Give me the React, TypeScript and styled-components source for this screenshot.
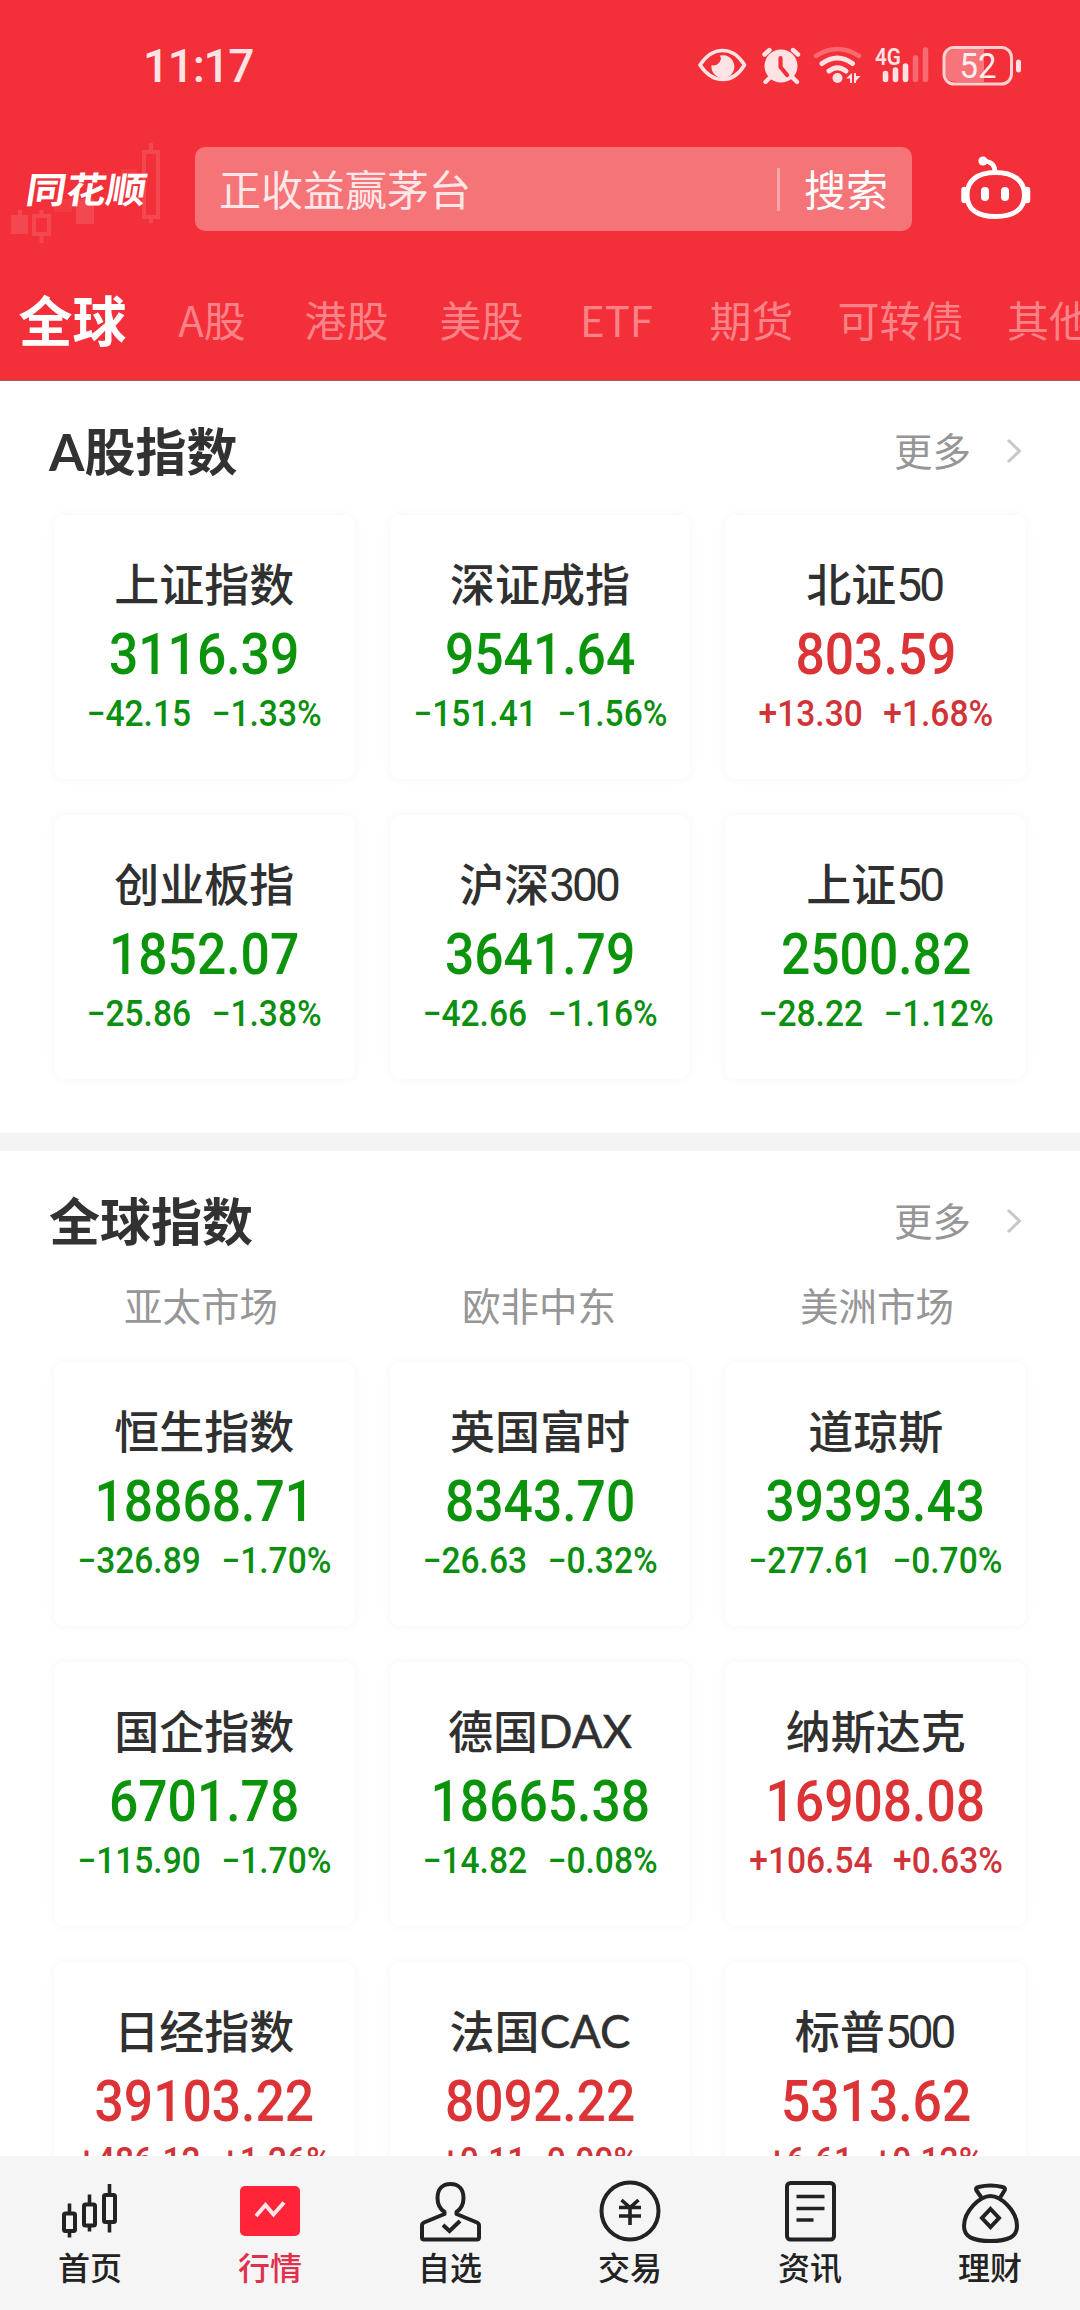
import React from "react";
import styled, { createGlobalStyle } from "styled-components";

const CJK = `"Noto Sans CJK SC", sans-serif`;
const MIX = `Lato, "Noto Sans CJK SC", sans-serif`;

const Global = createGlobalStyle`
  * { box-sizing: border-box; }
  body { margin: 0; background: #fff; font-family: ${CJK}; }
`;

const Screen = styled.div`
  width: 1080px;
  height: 2310px;
  display: flex;
  flex-direction: column;
  overflow: hidden;
  background: #fff;
`;

const Header = styled.header`
  flex: none;
  height: 381px;
  background: #f32f39;
  border-bottom: 1px solid #a8595c;
`;

const StatusBar = styled.div`
  height: 131px;
  padding: 0 59px 0 143px;
  display: flex;
  align-items: center;
  justify-content: space-between;
`;

const Clock = styled.span`
  font: 500 46px/60px Roboto, sans-serif;
  letter-spacing: -1.3px;
  color: #ffe3e4;
`;

const StatusSvg = styled.svg`
  display: block;
  width: 323px;
  height: 40px;
`;

const TopRow = styled.div`
  height: 116px;
  display: flex;
  align-items: center;
`;

const Brand = styled.div`
  position: relative;
  flex: none;
  width: 195px;
  height: 116px;
  display: flex;
  align-items: center;
  padding: 0 0 3px 27px;
`;

const BrandMark = styled.svg`
  position: absolute;
  left: 0;
  top: 0;
  width: 195px;
  height: 116px;
`;

const BrandName = styled.span`
  position: relative;
  font: 700 40px/40px ${CJK};
  color: #fff;
  transform: skewX(-9deg) scaleY(0.9);
`;

const Search = styled.div`
  flex: none;
  width: 717px;
  height: 84px;
  border-radius: 10px;
  background: #f57478;
  display: flex;
  align-items: center;
  padding-left: 24px;
`;

const Placeholder = styled.span`
  flex: 1;
  padding-bottom: 3px;
  font: 400 42px/60px ${CJK};
  color: #ffe6e7;
`;

const SearchRule = styled.i`
  width: 3px;
  height: 43px;
  background: #f9a6a8;
`;

const SearchButton = styled.span`
  width: 132px;
  padding: 0 0 3px 24px;
  font: 400 42px/60px ${CJK};
  color: #fff;
`;

const Robot = styled.svg`
  display: block;
  margin-left: 47px;
  width: 74px;
  height: 68px;
`;

const Tabs = styled.nav`
  height: 133px;
  padding-top: 10px;
  display: flex;
  align-items: center;
  overflow: hidden;
`;

const Tab = styled.span<{ $w: number; $active?: boolean }>`
  flex: none;
  width: ${(p) => p.$w}px;
  text-align: center;
  white-space: nowrap;
  font-family: ${CJK};
  font-size: ${(p) => (p.$active ? 54 : 42)}px;
  font-weight: ${(p) => (p.$active ? 700 : 400)};
  line-height: 80px;
  color: ${(p) => (p.$active ? "#fff" : "#fb8388")};
`;

const Body = styled.main`
  flex: 1;
  min-height: 0;
  overflow: hidden;
`;

const Section = styled.section<{ $last?: boolean }>`
  padding: 0 54px ${(p) => (p.$last ? 0 : 54)}px;
  border-bottom: ${(p) => (p.$last ? 0 : 18)}px solid #f4f4f4;
`;

const SectionHead = styled.div<{ $h: number }>`
  height: ${(p) => p.$h}px;
  padding-top: 32px;
  margin-left: -5px;
  display: flex;
  align-items: flex-start;
  justify-content: space-between;
`;

const Title = styled.h2`
  margin: 0;
  font: 700 51px/78px ${MIX};
  color: #323232;
`;

const More = styled.span`
  display: flex;
  align-items: center;
  gap: 35px;
  padding-right: 4px;
  font: 400 38.5px/72px ${CJK};
  color: #969696;
`;

const Chevron = styled.svg`
  display: block;
  width: 16px;
  height: 26px;
  margin-top: 3px;
`;

const Regions = styled.div`
  display: grid;
  grid-template-columns: repeat(3, 338px);
  margin: 0 -22px;
  height: 92px;
  text-align: center;
  font: 400 38.5px/68px ${CJK};
  color: #969696;
`;

const Grid = styled.div`
  display: grid;
  grid-template-columns: repeat(3, 1fr);
  grid-auto-rows: 264px;
  gap: 36px 35px;
`;

const Card = styled.article`
  display: flex;
  flex-direction: column;
  align-items: center;
  padding-top: 38px;
  border-radius: 10px;
  background: #fff;
  box-shadow: 0 0 12px rgba(0, 0, 0, 0.045);
  white-space: nowrap;
`;

const Name = styled.span`
  display: flex;
  height: 60px;
  font: 500 45px/60px ${CJK};
  color: #303030;
`;

const Latin = styled.span`
  font: 400 45.5px/62px Lato, sans-serif;
  -webkit-text-stroke: 0.5px #303030;
`;

const Digits = styled.span`
  font: 400 46px/64px Roboto, sans-serif;
  letter-spacing: -3px;
  margin-right: 3px;
`;

const Price = styled.span<{ $up?: boolean }>`
  margin-top: 9px;
  font: 500 57px/66px Roboto, sans-serif;
  color: ${(p) => (p.$up ? "#db3336" : "#0b940b")};
  transform: scaleX(0.905);
`;

const Change = styled.span<{ $up?: boolean }>`
  margin-top: 4px;
  display: flex;
  gap: 22px;
  font: 500 36px/44px Roboto, sans-serif;
  color: ${(p) => (p.$up ? "#d03439" : "#0b8f0f")};
  transform: scaleX(0.932);
`;

const BottomBar = styled.footer`
  flex: none;
  height: 154px;
  background: #f5f5f5;
  display: grid;
  grid-template-columns: repeat(6, 1fr);
`;

const NavItem = styled.div<{ $active?: boolean }>`
  display: flex;
  flex-direction: column;
  align-items: center;
  padding-top: 20px;
  font: 500 32px/40px ${CJK};
  color: ${(p) => (p.$active ? "#e0304a" : "#222")};
`;

const NavSvg = styled.svg`
  display: block;
  width: 70px;
  height: 70px;
  fill: none;
  stroke: #222;
  stroke-width: 4;
`;

type Quote = [name: string, price: string, diff: string, pct: string, up?: boolean];

const aShares: Quote[] = [
  ["上证指数", "3116.39", "−42.15", "−1.33%"],
  ["深证成指", "9541.64", "−151.41", "−1.56%"],
  ["北证50", "803.59", "+13.30", "+1.68%", true],
  ["创业板指", "1852.07", "−25.86", "−1.38%"],
  ["沪深300", "3641.79", "−42.66", "−1.16%"],
  ["上证50", "2500.82", "−28.22", "−1.12%"],
];

const world: Quote[] = [
  ["恒生指数", "18868.71", "−326.89", "−1.70%"],
  ["英国富时", "8343.70", "−26.63", "−0.32%"],
  ["道琼斯", "39393.43", "−277.61", "−0.70%"],
  ["国企指数", "6701.78", "−115.90", "−1.70%"],
  ["德国DAX", "18665.38", "−14.82", "−0.08%"],
  ["纳斯达克", "16908.08", "+106.54", "+0.63%", true],
  ["日经指数", "39103.22", "+486.12", "+1.26%", true],
  ["法国CAC", "8092.22", "+0.11", "0.00%", true],
  ["标普500", "5313.62", "+6.61", "+0.12%", true],
];

const tabs: [string, number][] = [
  ["全球", 145],
  ["A股", 134],
  ["港股", 135],
  ["美股", 135],
  ["ETF", 135],
  ["期货", 135],
  ["可转债", 163],
  ["其他", 134],
];

const StatusIcons = () => (
  <StatusSvg viewBox="0 0 323 40" fill="none">
    <g stroke="#ffe3e4" strokeWidth="3.6" strokeLinejoin="round">
      <path d="M2 19C8 10 15 4.500 24.500 4.500S41 10 46.500 19C41 28 34 33.500 24.500 33.500S8 28 2 19Z" />
    </g>
    <path d="M22 9.500A11.500 11.500 0 1 1 13.500 19A6.900 6.900 0 0 0 22 9.500Z" fill="#ffe3e4" />
    <circle cx="83" cy="20" r="16.500" fill="#ffe3e4" />
    <g stroke="#ffe3e4" strokeWidth="4.400" strokeLinecap="round">
      <path d="M66.500 8.500l5-4.500M100 8.500L95 4M72 31.500l-4.500 4.500M94.500 31.500l4.500 4.500" />
    </g>
    <path d="M82.500 12v9l6.500 8" stroke="#f32f39" strokeWidth="4.200" strokeLinecap="round" strokeLinejoin="round" />
    <path d="M118 10Q139.500-4 161 10" stroke="#f96a70" strokeWidth="4.500" strokeLinecap="round" />
    <path d="M124 17.500Q139.500 6.500 154.500 17.500M131 25Q139.500 18.500 148 25" stroke="#ffe3e4" strokeWidth="5" strokeLinecap="round" />
    <circle cx="139.500" cy="32" r="5" fill="#ffe3e4" />
    <path d="M148 32.500l6-5.500v10h-2v-4.500ZM156 27h2v3h4.500l-4.500 5v2h-2Z" fill="#ffe3e4" />
    <text x="177" y="18.500" fontFamily="Roboto, sans-serif" fontSize="24" fontWeight="600" fill="#ffe3e4" textLength="26" lengthAdjust="spacingAndGlyphs">4G</text>
    <g strokeWidth="5.600" strokeLinecap="round">
      <path d="M187.500 27.500v6M197.500 24v9.500M207.500 20v13.500" stroke="#ffe3e4" />
      <path d="M217.500 12v21.500M227.500 4v29.500" stroke="#f96a70" />
    </g>
    <path d="M259 3h27v33h-27q-12 0-12-11V14q0-11 12-11Z" fill="#f7747a" />
    <rect x="246" y="1.500" width="67.500" height="36.500" rx="10" stroke="#ffd0d2" strokeWidth="3" />
    <rect x="318" y="13.500" width="5" height="13" rx="2.500" fill="#ffe3e4" />
    <text x="280" y="32" textAnchor="middle" fontFamily="Roboto, sans-serif" fontSize="35" fontWeight="400" fill="#fff0f0" textLength="37" lengthAdjust="spacingAndGlyphs">52</text>
  </StatusSvg>
);

const Candles = () => (
  <BrandMark viewBox="0 0 195 116" fill="none" stroke="#f3484f" strokeWidth="4">
    <g fill="#f3484f" stroke="none">
      <rect x="11" y="84" width="17" height="19" />
      <rect x="18" y="79" width="4" height="6" />
      <rect x="54" y="68" width="18" height="13" opacity=".5" />
      <rect x="76" y="68" width="18" height="25" />
      <rect x="121" y="38" width="16" height="20" opacity=".5" />
    </g>
    <path d="M34 85h15v18h-15ZM41.500 79v6M41.500 103v9M144 21h14v65h-14ZM151 12v9M151 86v6" />
  </BrandMark>
);

const navItems: { label: string; active?: boolean; icon: React.ReactNode }[] = [
  {
    label: "首页",
    icon: (
      <>
        <rect x="9" y="37.500" width="11" height="17.500" rx="1.500" />
        <rect x="29" y="28.500" width="11" height="21" rx="1.500" />
        <rect x="49" y="19" width="11" height="27" rx="1.500" />
        <path d="M14.500 27.500v9M14.500 55.500v6M34.500 18.500v9M34.500 50.500v5M54.500 8v10M54.500 46.500v10" strokeWidth="3.600" />
      </>
    ),
  },
  {
    label: "行情",
    active: true,
    icon: (
      <>
        <rect x="5" y="10" width="60" height="50" rx="5" fill="#ff2438" stroke="none" />
        <path d="M21 40l9.500-11 8 9.500L49 26.500" stroke="#ffe5e7" />
      </>
    ),
  },
  {
    label: "自选",
    icon: (
      <>
        <path d="M29.500 36C25 33 22.500 28 22.500 22C22.500 13 27.500 8 35.500 8S48.500 13 48.500 22C48.500 28 46 33 41.500 36V38L62 46.500Q64 47.500 64 49.500V61.500Q64 63.500 62 63.500H9Q7 63.500 7 61.500V49.500Q7 47.500 9 46.500L29.500 38Z" strokeLinejoin="round" />
        <path d="M28 49l6.500 6L45 45" />
      </>
    ),
  },
  {
    label: "交易",
    icon: (
      <>
        <circle cx="35" cy="35" r="28.500" />
        <path d="M26.500 24l8.500 7.500 8.500-7.500M24 31.500h22M24 40h22M35 31v18" strokeWidth="3.600" />
      </>
    ),
  },
  {
    label: "资讯",
    icon: (
      <>
        <rect x="12" y="7" width="47" height="56.500" rx="3.500" />
        <path d="M21.500 20.500h28M21.500 32.500h28M21.500 44h17" strokeWidth="3.600" />
      </>
    ),
  },
  {
    label: "理财",
    icon: (
      <>
        <path d="M26 21L21.500 14.500Q20 11.500 23.500 11Q35.500 8 47.500 11Q51 11.500 49.500 14.500L45.500 21M35.500 20C46 20 62 35 62 50C62 61 53 65 35.500 65S9 61 9 50C9 35 25 20 35.500 20Z" strokeLinejoin="round" />
        <path d="M35.500 33l8.500 9-8.500 9-8.500-9Z" />
      </>
    ),
  },
];

const renderName = (name: string) => {
  const [, han, latin, digits] = name.match(/^([^A-Z0-9]+)([A-Z]*)([0-9]*)$/)!;
  return (
    <Name>
      {han}
      {latin && <Latin>{latin}</Latin>}
      {digits && <Digits>{digits}</Digits>}
    </Name>
  );
};

const Quotes = ({ items }: { items: Quote[] }) => (
  <Grid>
    {items.map(([name, price, diff, pct, up]) => (
      <Card key={name}>
        {renderName(name)}
        <Price $up={up}>{price}</Price>
        <Change $up={up}>
          <span>{diff}</span>
          <span>{pct}</span>
        </Change>
      </Card>
    ))}
  </Grid>
);

const Head = ({ title, height }: { title: string; height: number }) => (
  <SectionHead $h={height}>
    <Title>{title}</Title>
    <More>
      更多
      <Chevron viewBox="0 0 16 26" fill="none" stroke="#c8c8c8" strokeWidth="3">
        <path d="M2 2l11.500 11L2 24" />
      </Chevron>
    </More>
  </SectionHead>
);

export default function App() {
  return (
    <>
      <Global />
      <Screen>
        <Header>
          <StatusBar>
            <Clock>11:17</Clock>
            <StatusIcons />
          </StatusBar>
          <TopRow>
            <Brand>
              <Candles />
              <BrandName>同花顺</BrandName>
            </Brand>
            <Search>
              <Placeholder>正收益赢茅台</Placeholder>
              <SearchRule />
              <SearchButton>搜索</SearchButton>
            </Search>
            <Robot viewBox="0 0 74 68" fill="none" stroke="#fff" strokeWidth="5">
              <path d="M36.500 17.500C18 17.500 8 26 8 40S18 61.500 36.500 61.500S65.500 54 65.500 40S55 17.500 36.500 17.500Z" />
              <path d="M36 17C36 10 32 6.500 25 6" strokeWidth="4.500" />
              <circle cx="24" cy="6" r="4.600" fill="#fff" stroke="none" />
              <path d="M5.500 35v10M68 35v10" strokeWidth="6.500" strokeLinecap="round" />
              <path d="M26 36v6M46 36v6" strokeWidth="8" strokeLinecap="round" />
            </Robot>
          </TopRow>
          <Tabs>
            {tabs.map(([label, w], i) => (
              <Tab key={label} $w={w} $active={i === 0}>
                {label}
              </Tab>
            ))}
          </Tabs>
        </Header>
        <Body>
          <Section>
            <Head title="A股指数" height={134} />
            <Quotes items={aShares} />
          </Section>
          <Section $last>
            <Head title="全球指数" height={119} />
            <Regions>
              <span>亚太市场</span>
              <span>欧非中东</span>
              <span>美洲市场</span>
            </Regions>
            <Quotes items={world} />
          </Section>
        </Body>
        <BottomBar>
          {navItems.map(({ label, active, icon }) => (
            <NavItem key={label} $active={active}>
              <NavSvg viewBox="0 0 70 70">{icon}</NavSvg>
              {label}
            </NavItem>
          ))}
        </BottomBar>
      </Screen>
    </>
  );
}
